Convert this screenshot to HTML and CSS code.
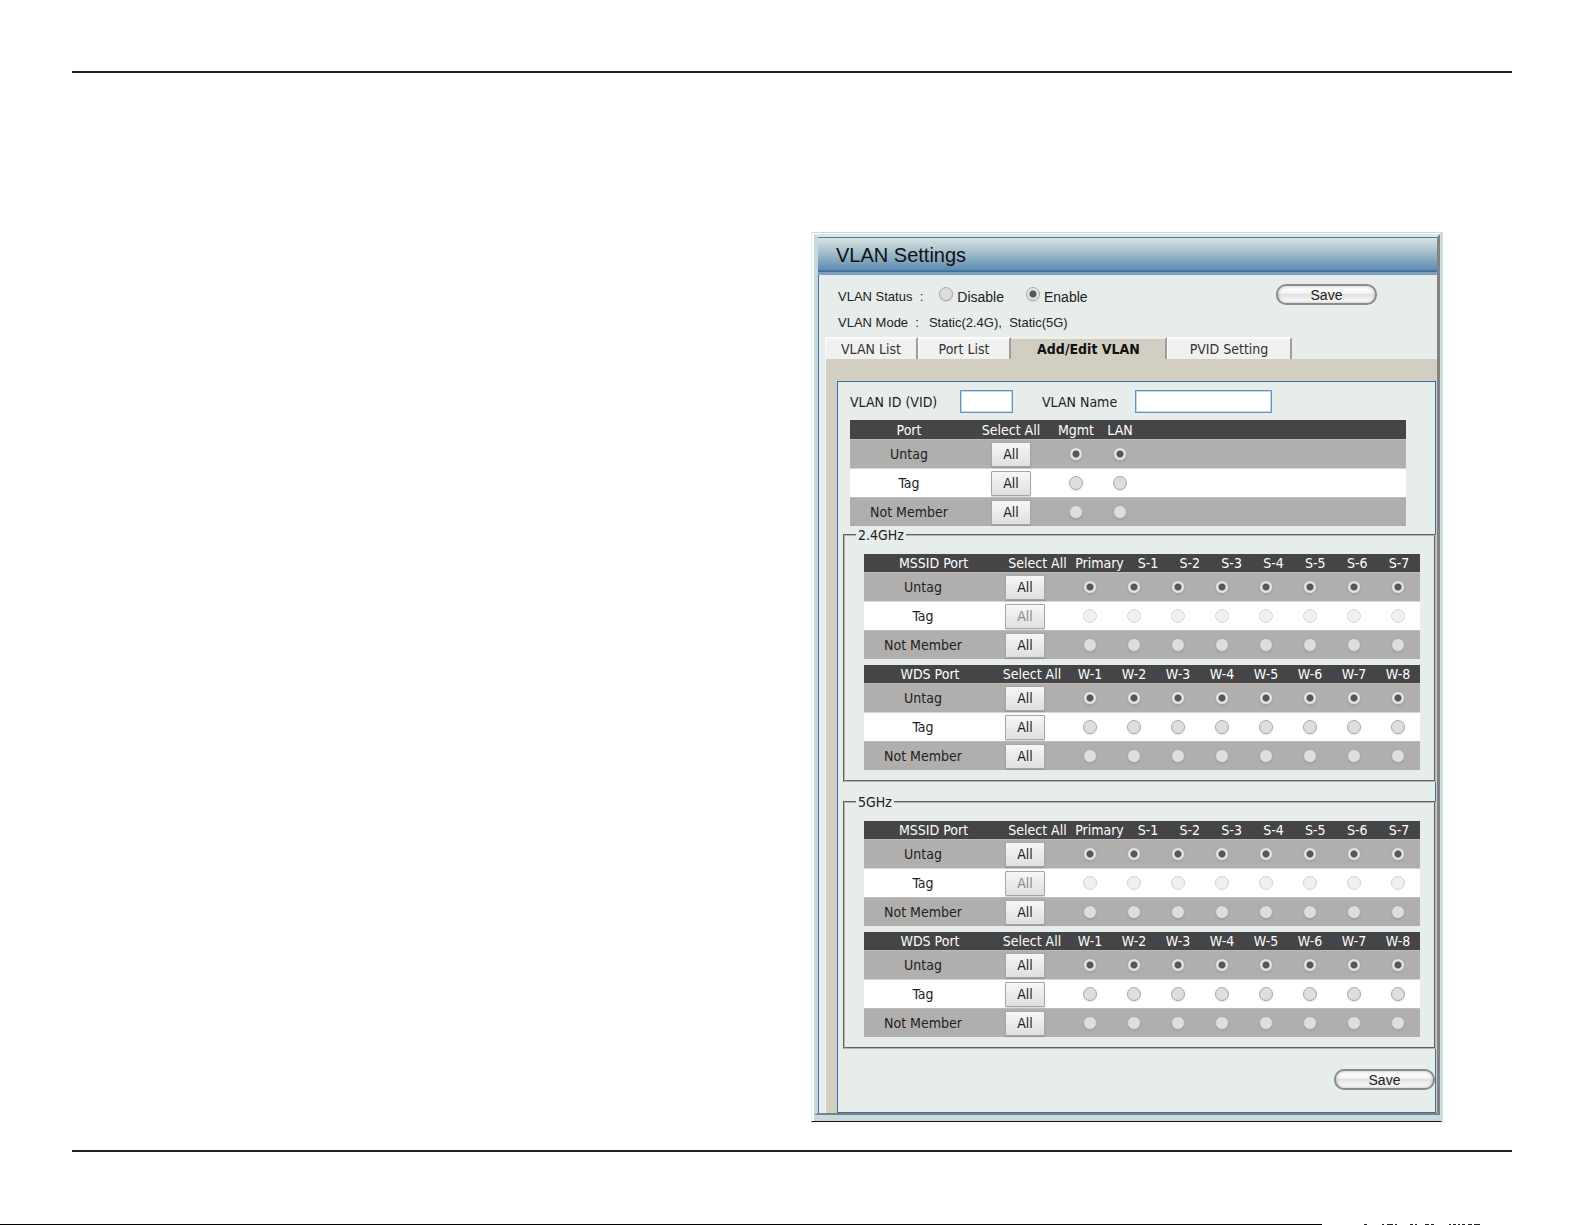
FILE: index.html
```html
<!DOCTYPE html>
<html lang="en">
<head>
    <meta charset="UTF-8">
    <meta name="viewport" content="width=device-width, initial-scale=1.0">
    <title>VLAN Settings</title>
    <link rel="stylesheet" href="styles.css">
</head>
<body>
    <main class="sheet">
        <section class="panel">
            <div class="frame">
                <h1 class="title">VLAN Settings</h1>

                <div class="status">
                    <div class="status-row">
                        <span class="status-label">VLAN Status&nbsp; :</span>
                        <label class="choice"><input type="radio" name="vlan-status">Disable</label>
                        <label class="choice"><input type="radio" name="vlan-status" checked>Enable</label>
                        <button class="save" type="button">Save</button>
                    </div>
                    <div class="status-row">
                        <span class="status-label">VLAN Mode&nbsp; :</span>
                        <span>Static(2.4G),&nbsp; Static(5G)</span>
                    </div>
                </div>

                <nav class="tabs">
                    <a class="tab" href="#list">VLAN List</a>
                    <a class="tab" href="#ports">Port List</a>
                    <a class="tab tab-wide tab-active" href="#edit">Add/Edit VLAN</a>
                    <a class="tab tab-mid" href="#pvid">PVID Setting</a>
                </nav>

                <div class="tab-body">
                    <form class="box">
                        <div class="fields">
                            <label for="vid">VLAN ID (VID)</label>
                            <input class="vid" id="vid" type="text">
                            <label for="vname">VLAN Name</label>
                            <input class="vname" id="vname" type="text">
                        </div>

                        <table class="ports ports-main" data-name="port" data-head="Port,Select All,Mgmt,LAN"></table>

                        <fieldset class="band">
                            <legend>2.4GHz</legend>
                            <table class="ports mssid" data-name="mssid24" data-lock="Tag" data-head="MSSID Port,Select All,Primary,S-1,S-2,S-3,S-4,S-5,S-6,S-7"></table>
                            <table class="ports wds" data-name="wds24" data-head="WDS Port,Select All,W-1,W-2,W-3,W-4,W-5,W-6,W-7,W-8"></table>
                        </fieldset>

                        <fieldset class="band">
                            <legend>5GHz</legend>
                            <table class="ports mssid" data-name="mssid5" data-lock="Tag" data-head="MSSID Port,Select All,Primary,S-1,S-2,S-3,S-4,S-5,S-6,S-7"></table>
                            <table class="ports wds" data-name="wds5" data-head="WDS Port,Select All,W-1,W-2,W-3,W-4,W-5,W-6,W-7,W-8"></table>
                        </fieldset>

                        <div class="actions">
                            <button class="save" type="button">Save</button>
                        </div>
                    </form>
                </div>
            </div>
        </section>
    </main>

    <div class="edge">
        <span class="edge-line"></span>
        <svg class="edge-marks" width="120" height="1" viewBox="0 0 120 1" aria-hidden="true">
            <path d="M0 .5H120" stroke="#222" stroke-dasharray="3 15 2 3 6 2 2 13 3 2 2 8 4 2 3 15 2 2 3 2 2 2 3 3 4 2 6 40"/>
        </svg>
    </div>

    <script src="script.js"></script>
</body>
</html>
```
FILE: styles.css
```css
* {
    box-sizing: border-box;
}
body {
    margin: 0;
    min-height: 100vh;
    display: flex;
    flex-direction: column;
    background: #fff;
    color: #222;
    font-family: "DejaVu Sans Condensed", "Noto Sans", sans-serif;
    font-size: 14px;
    line-height: 16px;
}
.sheet {
    margin: 71px 73px 0 72px;
    padding: 159px 0 28px;
    border-top: 2px solid #231f20;
    border-bottom: 2px solid #231f20;
    display: grid;
    grid-template-columns: 739fr 632fr 69fr;
}

/* outer panel */
.panel {
    grid-column: 2;
    border-top: 1px solid #cbdadc;
    border-left: 1px solid #e9efef;
    border-right: 3px solid #cbdadc;
    border-bottom: 1px solid #111;
    padding: 1px 0 0 2px;
    background: #fff;
}
.frame {
    background: #e6edeb;
    border-style: solid;
    border-width: 3px 3px 2px 4px;
    border-color: #dde8e8 #838383 #7c8080 #c6d8db;
    box-shadow: inset 1px 0 #3c74a5;
    padding-left: 1px;
}
.panel::after {
    content: "";
    display: block;
    height: 6px;
    background: #c9dbdd;
}
.title {
    margin: 0 0 0 -1px;
    height: 38px;
    padding-left: 18px;
    border-top: 1px solid #4a7ca6;
    border-bottom: 3px solid #7f9fbd;
    background: linear-gradient(#d7e3e3, #b4cad3 30%, #5c8cb0 95%, #3b6f9e 96%);
    color: #111;
    font: 20px/34px "Liberation Sans", Arial, sans-serif;
}

/* status lines */
.status {
    height: 62px;
    padding: 9px 60px 0 19px;
    font-family: "Liberation Sans", Arial, sans-serif;
    font-size: 13px;
}
.status-row {
    display: flex;
    align-items: flex-start;
    height: 26px;
    line-height: 26px;
}
.status-label {
    margin-right: 10px;
}
.choice {
    display: flex;
    align-items: center;
    gap: 4px;
    margin: 0 16px 0 6px;
    font-size: 14px;
}
.choice input {
    margin-bottom: 6px;
}
.save {
    width: 101px;
    height: 21px;
    margin-left: auto;
    padding: 0;
    border: 2px solid #8c8c8c;
    border-radius: 10px;
    background: linear-gradient(#fff, #f6f6f6 40%, #e2e2e2 50%, #fff);
    box-shadow: inset 0 0 3px #aaa;
    color: #222;
    font: 14px/16px "Liberation Sans", Arial, sans-serif;
}

/* tabs */
.tabs {
    display: flex;
    padding-left: 6px;
    height: 22px;
}
.tab {
    width: 93px;
    border-top: 2px solid #fafbfb;
    border-left: 1px solid #fafbfb;
    border-right: 2px solid #9c9e9e;
    background: #f0f1f0;
    color: #333;
    line-height: 20px;
    text-align: center;
    text-decoration: none;
}
.tab-wide {
    width: 156px;
}
.tab-mid {
    width: 125px;
}
.tab-active {
    background: #d3cec2;
    border-top-color: #efefe9;
    border-left-color: #d3cec2;
    color: #111;
    font-weight: bold;
}
.tab-body {
    margin-left: 6px;
    padding: 22px 1px 0 11px;
    border-left: 1px solid #f2f3f0;
    background: #d3cec2;
}
.box {
    border: 1px solid #3a6ea5;
    background: #e6edeb;
    padding-bottom: 22px;
}

/* VID and name */
.fields {
    display: flex;
    align-items: center;
    padding: 8px 0 7px 12px;
}
.fields input {
    height: 23px;
    border: 1px solid #5f93c4;
    box-shadow: inset 0 0 0 1px #c3d7e8;
    background: #fff;
    padding: 0 4px;
    font: inherit;
}
.fields label {
    width: 93px;
}
.fields label:first-child {
    width: 110px;
}
.fields .vid {
    width: 53px;
    margin-right: 29px;
}
.fields .vname {
    width: 137px;
}

/* port tables */
.ports {
    display: block;
}
.ports thead,
.ports tbody {
    display: block;
}
.ports tr {
    display: grid;
    grid-template-columns: 118px 86px repeat(8, 1fr);
    align-items: center;
}
.ports thead tr {
    height: 18px;
    background: #454547;
    color: #fff;
}
.ports-main thead tr {
    height: 19px;
}
.mssid thead tr {
    grid-template-columns: 139px 69px 55px repeat(7, 1fr);
}
.wds thead tr {
    grid-template-columns: 132px 72px repeat(8, 1fr);
}
.ports tbody tr {
    height: 29px;
    background: #b0afad;
    border-top: 1px solid #bdbcba;
}
.ports tbody tr:nth-child(2) {
    background: #fff;
    border-top-color: #d8d6d5;
}
.ports th,
.ports td {
    display: flex;
    justify-content: center;
    padding: 0;
    font-weight: normal;
    white-space: nowrap;
}
.ports-main {
    margin: 0 29px 0 12px;
}
.all {
    width: 40px;
    height: 25px;
    padding: 0;
    border: 1px solid #a5a5a5;
    border-radius: 1px;
    background: linear-gradient(#f7f7f7, #e0dfdf);
    box-shadow: 0 1px 1px rgba(0,0,0,0.15);
    color: #222;
    font: inherit;
}
.all:disabled {
    color: #8a8a86;
}
input[type="radio"] {
    appearance: none;
    width: 14px;
    height: 14px;
    margin: 0;
    border: 1px solid #aaa9a7;
    border-radius: 50%;
    background: #dfdedd;
    box-shadow: 0 1px 1px rgba(0,0,0,0.1);
}
input[type="radio"]:checked {
    background: radial-gradient(circle, #555758 3px, #e3e3e2 4px);
}
input[type="radio"]:disabled {
    border-color: #d5d5d5;
    background: #f0f0f0;
    box-shadow: none;
}

.choice input[type="radio"] {
    margin-bottom: 6px;
}

/* radio bands */
.band {
    margin: 1px -1px 0 5px;
    padding: 11px 14px 10px 19px;
    border: 2px groove #b5b5b5;
    min-width: 0;
}
.band + .band {
    margin-top: 12px;
}
.band legend {
    margin-left: -8px;
    padding: 0 2px;
}
.band .wds {
    margin-top: 6px;
}
.actions {
    display: flex;
    margin-top: 20px;
}

/* bottom edge of the sheet */
.edge {
    display: flex;
    margin-top: auto;
    height: 1px;
}
.edge-line {
    flex: 0 0 83.4%;
    background: #000;
}
.edge-marks {
    margin-left: 42px;
}
```
FILE: script.js
```js
const rows = ['Untag', 'Tag', 'Not Member'];

// every table has the same three rows, only the ports differ
document.querySelectorAll('.ports').forEach(table => {
    const head = table.dataset.head.split(',');
    const ports = head.slice(2);

    let html = '<thead><tr>' + head.map(h => `<th>${h}</th>`).join('') + '</tr></thead><tbody>';
    rows.forEach((row, i) => {
        const off = table.dataset.lock === row ? 'disabled' : '';
        html += `<tr><td>${row}</td><td><button class="all" type="button" ${off}>All</button></td>`;
        ports.forEach(port => {
            html += `<td><input type="radio" name="${table.dataset.name}-${port}" aria-label="${port} ${row}" ${i === 0 ? 'checked' : ''} ${off}></td>`;
        });
        html += '</tr>';
    });
    table.innerHTML = html + '</tbody>';
});
```
